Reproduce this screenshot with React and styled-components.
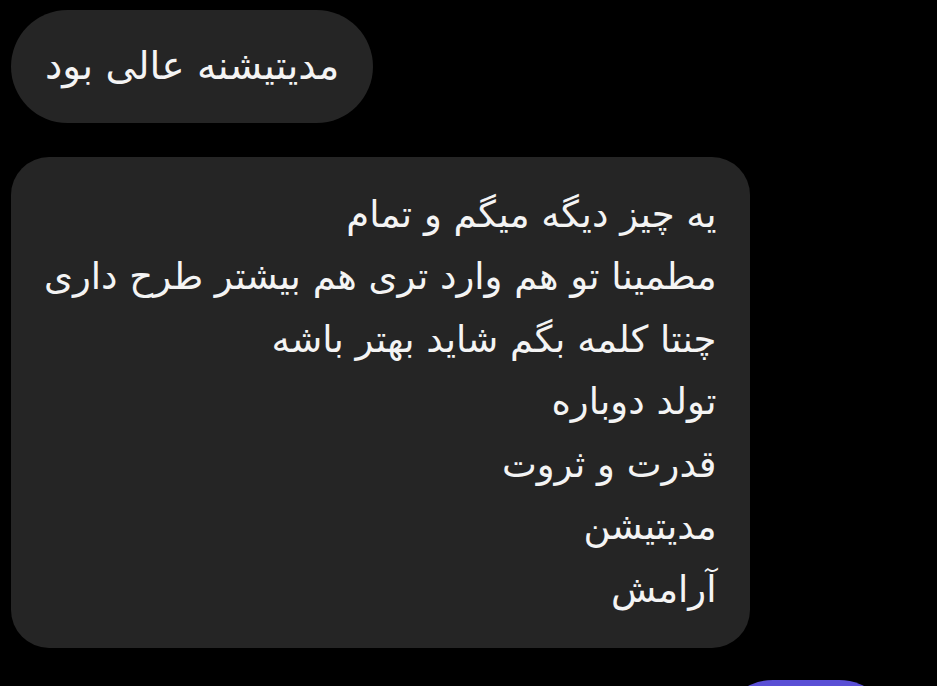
import React from "react";
import styled, { createGlobalStyle } from "styled-components";

const GlobalStyle = createGlobalStyle`
  html, body {
    margin: 0;
    padding: 0;
    background-color: #000000;
  }
  body {
    font-family: "DejaVu Sans", "Noto Sans", sans-serif;
    overflow: hidden;
  }
`;

const Thread = styled.div`
  display: flex;
  flex-direction: column;
  align-items: flex-start;
  padding: 10px 11px 0 11px;
  width: 937px;
  height: 686px;
  box-sizing: border-box;
  overflow: hidden;
`;

const Bubble = styled.div`
  direction: rtl;
  text-align: right;
  background-color: ${(p) => (p.$mine ? "#5a4fd5" : "#252525")};
  color: #f4f4f4;
  font-size: ${(p) => p.$size || 37}px;
  line-height: 62.5px;
  border-radius: ${(p) => (p.$pill ? "57px" : "38px")};
  padding: ${(p) => (p.$pill ? "25px 34px" : "27px 33px")};
  margin-bottom: ${(p) => p.$gap || 0}px;
  align-self: ${(p) => (p.$mine ? "flex-end" : "flex-start")};
  box-sizing: border-box;
  white-space: pre-line;
  flex-shrink: 0;
`;

const OutgoingBubble = styled(Bubble)`
  width: 176px;
  height: 110px;
  margin-right: 32px;
`;

const lines = [
  "یه چیز دیگه میگم و تمام",
  "مطمینا تو هم وارد تری هم بیشتر طرح داری",
  "چنتا کلمه بگم شاید بهتر باشه",
  "تولد دوباره",
  "قدرت و ثروت",
  "مدیتیشن",
  "آرامش",
];

export default function App() {
  return (
    <>
      <GlobalStyle />
      <Thread>
        <Bubble $pill $gap={34} $size={38.8}>مدیتیشنه عالی بود</Bubble>
        <Bubble $gap={32}>{lines.join("\n")}</Bubble>
        <OutgoingBubble $mine $pill />
      </Thread>
    </>
  );
}
